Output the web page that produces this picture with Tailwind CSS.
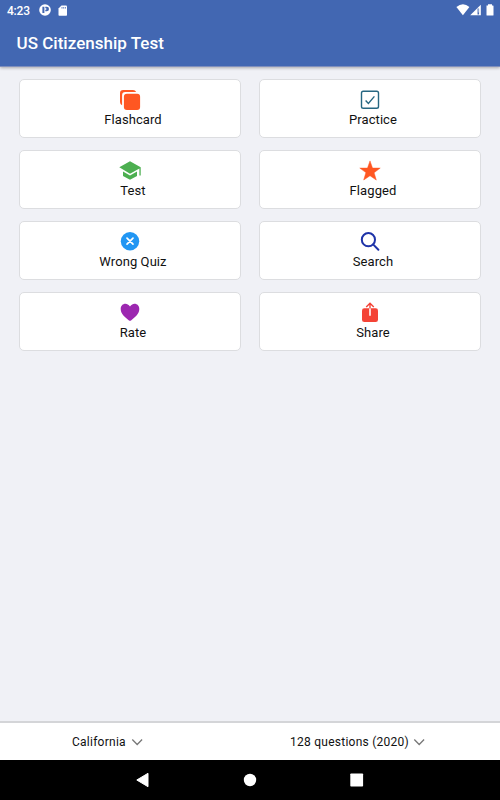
<!DOCTYPE html>
<html lang="en">
<head>
<meta charset="utf-8">
<title>US Citizenship Test</title>
<script src="https://cdn.jsdelivr.net/npm/@tailwindcss/browser@4"></script>
</head>
<body class="w-[500px] h-[800px] overflow-hidden flex flex-col bg-[#f0f1f6] font-[Roboto,sans-serif] text-[#111]">
<header class="h-[67px] shrink-0 bg-[#4267b2] text-white border-b border-[#7f8fbd] shadow-[0_1px_3px_rgba(0,0,0,0.3)]">
  <div class="h-5 flex items-center justify-between pl-[7px] pr-[6px]">
    <div class="flex items-center">
      <span class="w-[32px] pt-px text-[12px] leading-5 font-medium tracking-[-0.2px] whitespace-nowrap">4:23</span>
      <svg class="w-[12px] h-[12px]" viewBox="0 0 12 12"><circle cx="6" cy="6" r="5.8" fill="#fff"/><path d="M3.4 2.8h2v6.200h-2zM6.300 2.800h1.500a2.200 2.200 0 0 1 0 4.400H6.300V5.800h1V4.200h-1z" fill="#4267b2"/></svg>
      <svg class="w-[10px] h-[11px] ml-[7px]" viewBox="0 0 10 11"><path d="M3.5.5H8q1 0 1 1V10q0 .7-.8.7H1.3q-.8 0-.8-.7V3.5z" fill="#fff"/><path d="M4 2v1.6M5.7 2v1.6M7.4 2v1.6" stroke="#4267b2" stroke-width=".8"/></svg>
    </div>
    <svg class="w-[38px] h-[12px]" viewBox="0 0 38 12"><path d="M.4 3Q7-2.3 13.4 3L6.9 11.2z" fill="#fff"/><path d="M14.2 11.2 24.8.8v10.4z" fill="#fff"/><path d="M22.3 4.5v6" stroke="#4267b2" stroke-width="1.6"/><path d="M22.3 4.5v4" stroke="#fff" stroke-width=".5"/><path d="M30.5 1.4H32V.2h4v1.2h1q.5 0 .5.6v9q0 .6-.6.6h-5.8q-.6 0-.6-.6z" fill="#fff"/></svg>
  </div>
  <h1 class="pl-[16.5px] pt-[11px] text-[17px] leading-[24px] font-medium tracking-[0.02px]">US Citizenship Test</h1>
</header>

<main class="grow grid grid-cols-2 auto-rows-[59px] content-start gap-x-[18px] gap-y-[12px] px-[19px] pt-[12px] text-[13px] leading-[18px] tracking-[0.08px]">
  <section class="bg-white border border-[#dcdde0] rounded-[5px] flex flex-col items-center pt-[9px]">
    <svg class="w-[22px] h-[22px] shrink-0" viewBox="0 0 22 22"><path d="M3.1 16.2A3.5 3.5 0 0 1 1 13V4.2A3.2 3.2 0 0 1 4.2 1H14a3.5 3.5 0 0 1 3.2 2.1H6.3a3.2 3.2 0 0 0-3.2 3.2z" fill="#ff5722"/><rect x="4.9" y="4.8" width="16.2" height="16.2" rx="3" fill="#ff5722"/></svg>
    <span class="pl-[6px]">Flashcard</span>
  </section>
  <section class="bg-white border border-[#dcdde0] rounded-[5px] flex flex-col items-center pt-[9px]">
    <svg class="w-[22px] h-[22px] shrink-0" viewBox="0 0 22 22" fill="none" stroke="#266782" stroke-width="1.4"><rect x="2.5" y="2.2" width="17" height="17" rx="1.8"/><path d="m6.6 11.4 2.8 3 6-7"/></svg>
    <span class="pl-[6px]">Practice</span>
  </section>
  <section class="bg-white border border-[#dcdde0] rounded-[5px] flex flex-col items-center pt-[9px]">
    <svg class="w-[22px] h-[22px] shrink-0" viewBox="0 0 22 22" fill="#4caf50"><path d="M11 1.2 21.7 7.2v8.4h-1.3V8.4L11 13.7.3 7.3z"/><path d="M4 11.4l7 4 7-4v4.5l-7 3.9-7-3.9z"/></svg>
    <span class="pl-[6px]">Test</span>
  </section>
  <section class="bg-white border border-[#dcdde0] rounded-[5px] flex flex-col items-center pt-[9px]">
    <svg class="w-[22px] h-[22px] shrink-0" viewBox="0 0 22 22" fill="#ff5722"><path d="m11 .9 2.5 7.2h7.7l-6.1 4.6 2.2 7.4-6.3-4.4L4.7 20l2.2-7.4L.8 8.1h7.7z" stroke="#ff5722" stroke-width=".5" stroke-linejoin="round"/></svg>
    <span class="pl-[6px]">Flagged</span>
  </section>
  <section class="bg-white border border-[#dcdde0] rounded-[5px] flex flex-col items-center pt-[9px]">
    <svg class="w-[22px] h-[22px] shrink-0" viewBox="0 0 22 22"><circle cx="11" cy="10.2" r="9.2" fill="#2196f3"/><path d="m8 7.2 6 6m0-6-6 6" stroke="#fff" stroke-width="1.7" stroke-linecap="round"/></svg>
    <span class="pl-[6px]">Wrong Quiz</span>
  </section>
  <section class="bg-white border border-[#dcdde0] rounded-[5px] flex flex-col items-center pt-[9px]">
    <svg class="w-[22px] h-[22px] shrink-0" viewBox="0 0 22 22" fill="none" stroke="#1e33a8" stroke-width="2"><circle cx="9.4" cy="8.7" r="6.6"/><path d="m14.1 13.4 5.3 5.3" stroke-linecap="round"/></svg>
    <span class="pl-[6px]">Search</span>
  </section>
  <section class="bg-white border border-[#dcdde0] rounded-[5px] flex flex-col items-center pt-[9px]">
    <svg class="w-[22px] h-[22px] shrink-0" viewBox="0 0 22 22" fill="#9c27b0"><path d="M11 4.4C12.4 2.6 14 1.8 15.5 1.8c2.8 0 4.8 2.2 4.8 5.1 0 5-4.5 8.2-8.3 11.6q-1 .7-2 0C6.2 15.1 1.7 11.9 1.7 6.9c0-2.9 2-5.1 4.8-5.1 1.5 0 3.1.8 4.5 2.6z"/></svg>
    <span class="pl-[6px]">Rate</span>
  </section>
  <section class="bg-white border border-[#dcdde0] rounded-[5px] flex flex-col items-center pt-[9px]">
    <svg class="w-[22px] h-[22px] shrink-0" viewBox="0 0 22 22"><rect x="3" y="6.3" width="16" height="13.8" rx="2.3" fill="#f44336"/><path d="M11 6.3v7.5" stroke="#fff" stroke-width="1.6"/><path d="M11 6.3V1.4M7.2 5 11 1.200l3.800 3.800" fill="none" stroke="#f44336" stroke-width="1.400"/></svg>
    <span class="pl-[6px]">Share</span>
  </section>
</main>

<div class="h-[39px] shrink-0 bg-white border-t-2 border-[#d4d5d8] flex items-center text-[12px] leading-[16px] tracking-[0.25px]">
  <div class="flex items-center pl-[72px] w-[290px]"><span class="w-[59px] whitespace-nowrap">California</span><svg class="w-[12px] h-[8px]" viewBox="0 0 12 8" fill="none" stroke="#777" stroke-width="1.3"><path d="M1.3 1.5 6.2 6.500 11.100 1.500"/></svg></div>
  <div class="flex items-center"><span class="w-[123px] whitespace-nowrap">128 questions (2020)</span><svg class="w-[12px] h-[8px]" viewBox="0 0 12 8" fill="none" stroke="#777" stroke-width="1.3"><path d="M1.3 1.5 6.2 6.500 11.100 1.500"/></svg></div>
</div>
<nav class="h-10 shrink-0 bg-black">
  <svg class="w-[500px] h-10" viewBox="0 0 500 40" fill="#fff"><path d="M136.800 20 148 13.300v13.400z" stroke="#fff" stroke-linejoin="round"/><circle cx="250" cy="20" r="6.200"/><rect x="350.300" y="13.500" width="12.800" height="13" rx=".8"/></svg>
</nav>
</body>
</html>
